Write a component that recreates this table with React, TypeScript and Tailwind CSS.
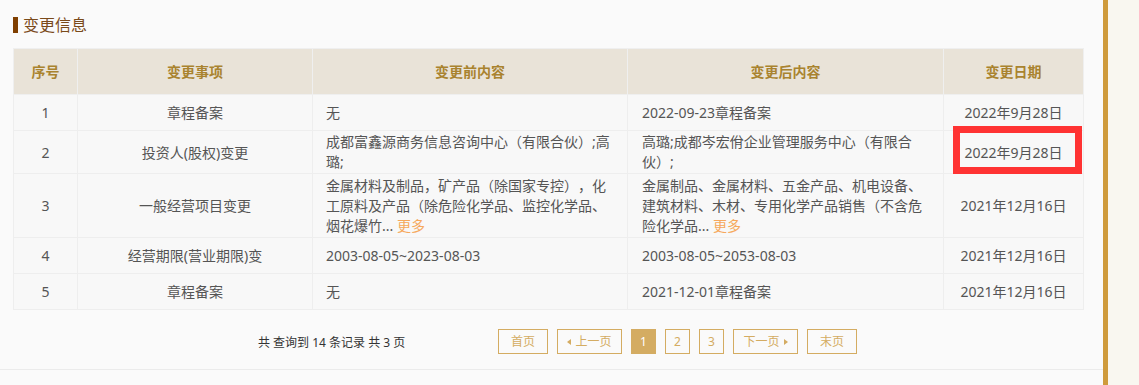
import React from "react";

const font = { fontFamily: '"Noto Sans", "Noto Sans CJK SC", sans-serif' };

function More() {
  return <span className="text-[#f6a85c]">更多</span>;
}

const rows: { no: string; item: string; before: React.ReactNode[]; after: React.ReactNode[]; date: string; h: string }[] = [
  { no: "1", item: "章程备案", before: ["无"], after: ["2022-09-23章程备案"], date: "2022年9月28日", h: "h-[36px]" },
  {
    no: "2",
    item: "投资人(股权)变更",
    before: ["成都富鑫源商务信息咨询中心（有限合伙）;高", "璐;"],
    after: ["高璐;成都岑宏佾企业管理服务中心（有限合", "伙）;"],
    date: "2022年9月28日",
    h: "h-[43px]",
  },
  {
    no: "3",
    item: "一般经营项目变更",
    before: [
      "金属材料及制品，矿产品（除国家专控），化",
      "工原料及产品（除危险化学品、监控化学品、",
      <>烟花爆竹... <More /></>,
    ],
    after: [
      "金属制品、金属材料、五金产品、机电设备、",
      "建筑材料、木材、专用化学产品销售（不含危",
      <>险化学品... <More /></>,
    ],
    date: "2021年12月16日",
    h: "h-[64px]",
  },
  { no: "4", item: "经营期限(营业期限)变", before: ["2003-08-05~2023-08-03"], after: ["2003-08-05~2053-08-03"], date: "2021年12月16日", h: "h-[36px]" },
  { no: "5", item: "章程备案", before: ["无"], after: ["2021-12-01章程备案"], date: "2021年12月16日", h: "h-[36px]" },
];

function Lines({ lines }: { lines: React.ReactNode[] }) {
  return (
    <div className="flex flex-col">
      {lines.map((l, i) => (
        <div key={i} className="whitespace-nowrap leading-[20px]">
          {l}
        </div>
      ))}
    </div>
  );
}

function Btn({ children, w, active }: { children: React.ReactNode; w: string; active?: boolean }) {
  return (
    <div
      className={`${w} h-[25px] flex items-center justify-center border border-[#d4ac62] text-[12px] ${
        active ? "bg-[#d4ac62] text-white" : "text-[#d4ac62]"
      }`}
    >
      {children}
    </div>
  );
}

export default function App() {
  return (
    <div
      className="relative flex w-[1139px] h-[385px] bg-[#f9f7f0] overflow-hidden [text-spacing-trim:space-all]"
      style={font}
    >
      <div className="w-[1103px] h-full bg-[#fafafa] flex flex-col">
        <div className="pl-[13px] pt-[17px] flex items-center h-[33px]">
          <div className="w-[5px] h-[16px] bg-[#7f3f00]" />
          <div className="ml-[5px] text-[16px] leading-[16px] text-[#7a4a1a]">变更信息</div>
        </div>
        <div className="pl-[13px] mt-[15px]">
          <table className="table-fixed border-collapse w-[1070px] text-[14px] text-[#555]">
            <colgroup>
              <col className="w-[64px]" />
              <col className="w-[235px]" />
              <col className="w-[315px]" />
              <col className="w-[316px]" />
              <col className="w-[140px]" />
            </colgroup>
            <thead>
              <tr className="h-[46px] bg-[#e9e3d8] text-[#a9832f] text-[14px]">
                <th className="border border-[#efefef] font-bold">序号</th>
                <th className="border border-[#efefef] font-bold">变更事项</th>
                <th className="border border-[#efefef] font-bold">变更前内容</th>
                <th className="border border-[#efefef] font-bold">变更后内容</th>
                <th className="border border-[#efefef] font-bold">变更日期</th>
              </tr>
            </thead>
            <tbody>
              {rows.map((r) => (
                <tr key={r.no} className={`${r.h} bg-[#f8f8f8]`}>
                  <td className="border border-[#eeeeee] text-center py-0">{r.no}</td>
                  <td className="border border-[#eeeeee] text-center py-0 whitespace-nowrap">{r.item}</td>
                  <td className="border border-[#eeeeee] pl-[13px] py-0">
                    <Lines lines={r.before} />
                  </td>
                  <td className="border border-[#eeeeee] pl-[14px] py-0">
                    <Lines lines={r.after} />
                  </td>
                  <td className="border border-[#eeeeee] text-center py-0 whitespace-nowrap">{r.date}</td>
                </tr>
              ))}
            </tbody>
          </table>
        </div>
        <div className="flex items-center mt-[19px] h-[25px]">
          <div className="ml-[258px] w-[240px] text-[12px] text-[#333] whitespace-nowrap pt-[3px]">
            共 查询到 14 条记录 共 3 页
          </div>
          <div className="flex gap-[9px]">
            <Btn w="w-[50px]">首页</Btn>
            <Btn w="w-[65px]">
              <span className="inline-block w-0 h-0 border-y-[3px] border-y-transparent border-r-[4px] border-r-[#d4ac62] mr-[4px]" />
              上一页
            </Btn>
            <Btn w="w-[25px]" active>
              1
            </Btn>
            <Btn w="w-[25px]">2</Btn>
            <Btn w="w-[25px]">3</Btn>
            <Btn w="w-[65px]">
              下一页
              <span className="inline-block w-0 h-0 border-y-[3px] border-y-transparent border-l-[4px] border-l-[#d4ac62] ml-[4px]" />
            </Btn>
            <Btn w="w-[50px]">末页</Btn>
          </div>
        </div>
        <div className="mt-[15px] border-t border-[#ebebeb]" />
      </div>
      <div className="w-[5px] h-full bg-[#cf9b3c]" />
      <div className="absolute left-[953px] top-[126px] w-[129px] h-[48px] border-[7px] border-[#ff3333]" />
    </div>
  );
}
